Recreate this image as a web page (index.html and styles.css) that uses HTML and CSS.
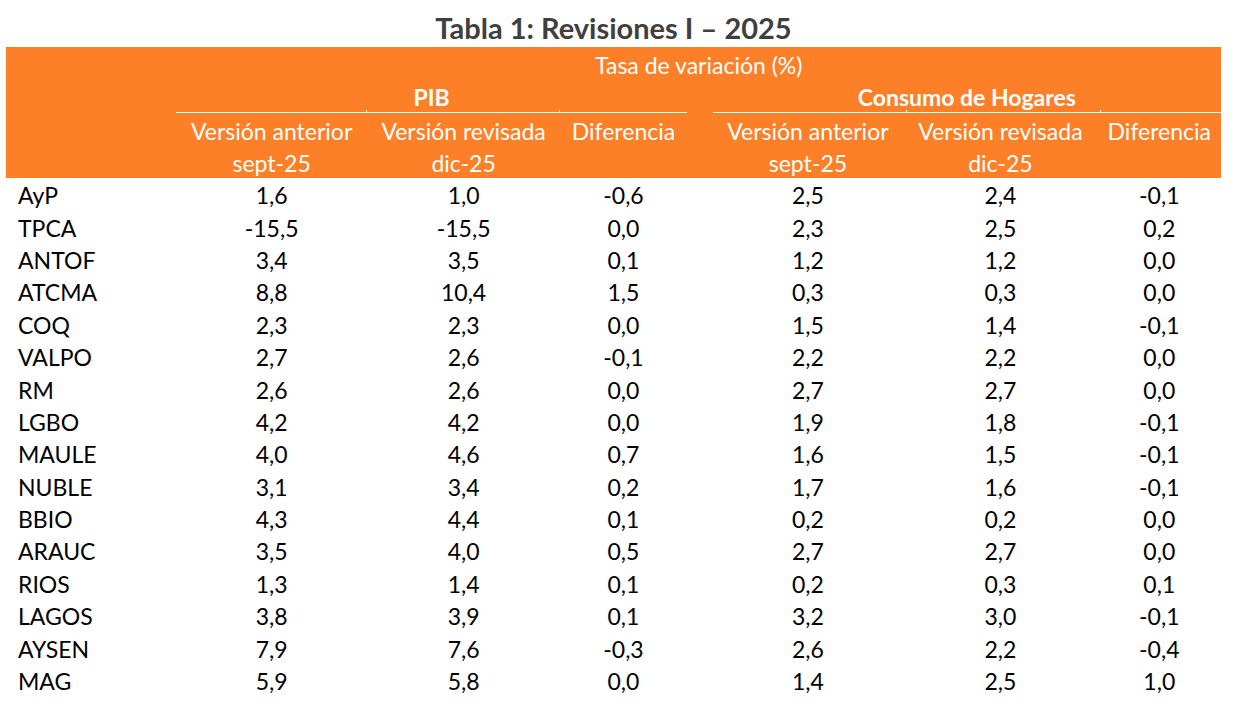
FILE: index.html
```html
<!DOCTYPE html>
<html lang="es">
<head>
<meta charset="utf-8">
<title>Tabla 1: Revisiones I – 2025</title>
<link rel="stylesheet" href="styles.css">
</head>
<body>
<div class="page">
  <h1 class="title">Tabla 1: Revisiones I – 2025</h1>
  <table class="tbl">
    <colgroup>
      <col class="c-label"><col class="c-a"><col class="c-b"><col class="c-d">
      <col class="c-gap">
      <col class="c-a"><col class="c-b2"><col class="c-d2">
    </colgroup>
    <thead>
      <tr class="h-row">
        <th></th>
        <th colspan="7" class="h-tasa">Tasa de variación (%)</th>
      </tr>
      <tr class="h-row">
        <th></th>
        <th colspan="3" class="h-group">PIB<span class="tick t1"></span><span class="tick t2"></span></th>
        <th></th>
        <th colspan="3" class="h-group">Consumo de Hogares<span class="tick t3"></span><span class="tick t4"></span></th>
      </tr>
      <tr class="h-row">
        <th></th>
        <th>Versión anterior</th>
        <th>Versión revisada</th>
        <th>Diferencia</th>
        <th></th>
        <th>Versión anterior</th>
        <th>Versión revisada</th>
        <th>Diferencia</th>
      </tr>
      <tr class="h-row">
        <th></th>
        <th>sept-25</th>
        <th>dic-25</th>
        <th></th>
        <th></th>
        <th>sept-25</th>
        <th>dic-25</th>
        <th></th>
      </tr>
    </thead>
    <tbody>
      <tr><td class="lbl">AyP</td><td>1,6</td><td>1,0</td><td>-0,6</td><td></td><td>2,5</td><td>2,4</td><td>-0,1</td></tr>
      <tr><td class="lbl">TPCA</td><td>-15,5</td><td>-15,5</td><td>0,0</td><td></td><td>2,3</td><td>2,5</td><td>0,2</td></tr>
      <tr><td class="lbl">ANTOF</td><td>3,4</td><td>3,5</td><td>0,1</td><td></td><td>1,2</td><td>1,2</td><td>0,0</td></tr>
      <tr><td class="lbl">ATCMA</td><td>8,8</td><td>10,4</td><td>1,5</td><td></td><td>0,3</td><td>0,3</td><td>0,0</td></tr>
      <tr><td class="lbl">COQ</td><td>2,3</td><td>2,3</td><td>0,0</td><td></td><td>1,5</td><td>1,4</td><td>-0,1</td></tr>
      <tr><td class="lbl">VALPO</td><td>2,7</td><td>2,6</td><td>-0,1</td><td></td><td>2,2</td><td>2,2</td><td>0,0</td></tr>
      <tr><td class="lbl">RM</td><td>2,6</td><td>2,6</td><td>0,0</td><td></td><td>2,7</td><td>2,7</td><td>0,0</td></tr>
      <tr><td class="lbl">LGBO</td><td>4,2</td><td>4,2</td><td>0,0</td><td></td><td>1,9</td><td>1,8</td><td>-0,1</td></tr>
      <tr><td class="lbl">MAULE</td><td>4,0</td><td>4,6</td><td>0,7</td><td></td><td>1,6</td><td>1,5</td><td>-0,1</td></tr>
      <tr><td class="lbl">NUBLE</td><td>3,1</td><td>3,4</td><td>0,2</td><td></td><td>1,7</td><td>1,6</td><td>-0,1</td></tr>
      <tr><td class="lbl">BBIO</td><td>4,3</td><td>4,4</td><td>0,1</td><td></td><td>0,2</td><td>0,2</td><td>0,0</td></tr>
      <tr><td class="lbl">ARAUC</td><td>3,5</td><td>4,0</td><td>0,5</td><td></td><td>2,7</td><td>2,7</td><td>0,0</td></tr>
      <tr><td class="lbl">RIOS</td><td>1,3</td><td>1,4</td><td>0,1</td><td></td><td>0,2</td><td>0,3</td><td>0,1</td></tr>
      <tr><td class="lbl">LAGOS</td><td>3,8</td><td>3,9</td><td>0,1</td><td></td><td>3,2</td><td>3,0</td><td>-0,1</td></tr>
      <tr><td class="lbl">AYSEN</td><td>7,9</td><td>7,6</td><td>-0,3</td><td></td><td>2,6</td><td>2,2</td><td>-0,4</td></tr>
      <tr><td class="lbl">MAG</td><td>5,9</td><td>5,8</td><td>0,0</td><td></td><td>1,4</td><td>2,5</td><td>1,0</td></tr>
    </tbody>
  </table>
</div>
</body>
</html>
```
FILE: styles.css
```css
html, body {
  margin: 0;
  padding: 0;
  background: #ffffff;
}

body {
  font-family: Lato, "Open Sans", "Liberation Sans", sans-serif;
  color: #000000;
}

.page {
  padding: 0 0 0 6px;
  width: 1215px;
}

.title {
  margin: 0;
  height: 47px;
  box-sizing: border-box;
  padding-top: 12px;
  text-align: center;
  font-size: 29px;
  line-height: 32px;
  font-weight: 700;
  color: #3f3f3f;
}

.tbl {
  width: 1215px;
  table-layout: fixed;
  border-collapse: collapse;
  border-spacing: 0;
  font-size: 23px;
}

.c-label { width: 170px; }
.c-a { width: 190px; }
.c-b { width: 193px; }
.c-d { width: 126px; }
.c-gap { width: 26px; }
.c-b2 { width: 194px; }
.c-d2 { width: 123px; }

.tbl thead {
  background: #fd7f27;
  color: #ffffff;
}

.tbl th {
  padding: 3px 0 0;
  height: 32.75px;
  box-sizing: border-box;
  font-weight: 400;
  text-align: center;
  vertical-align: middle;
  white-space: nowrap;
  line-height: 26px;
}

.tbl th.h-group {
  font-weight: 700;
  border-bottom: 1px solid #ffffff;
  position: relative;
}

.tick {
  position: absolute;
  bottom: 0;
  width: 1px;
  height: 2px;
  background: #ffffff;
}
.t1 { left: 190px; }
.t2 { left: 383px; }
.t3 { left: 193px; }
.t4 { left: 387px; }

.tbl td {
  padding: 2px 0 0;
  box-sizing: border-box;
  height: 32.4px;
  text-align: center;
  vertical-align: middle;
  line-height: 26px;
  white-space: nowrap;
}

.tbl td.lbl {
  text-align: left;
  padding-left: 12px;
}
```
